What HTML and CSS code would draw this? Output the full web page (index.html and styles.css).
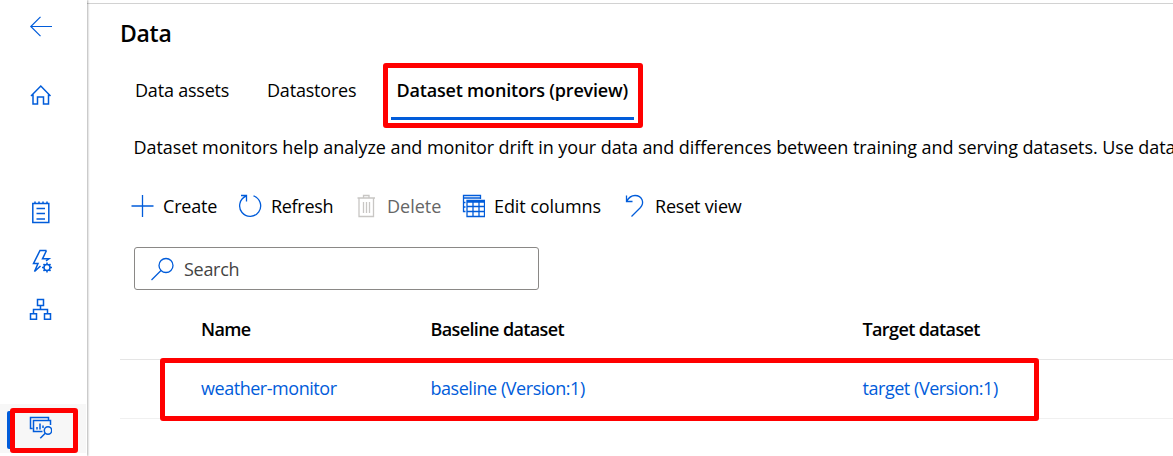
FILE: index.html
```
<!DOCTYPE html>
<html lang="en">
<head>
<meta charset="utf-8">
<title>Data</title>
<link rel="stylesheet" href="styles.css">
</head>
<body>
<div class="app">
  <nav class="sidebar">
    <a class="nav-item nav-back"><svg class="icon" viewBox="0 0 24 24"><path d="M24 12.500H2.500M12.500 2.800 2.800 12.500l9.700 9.700"/></svg></a>
    <a class="nav-item nav-home"><svg class="icon" viewBox="0 0 24 24"><path d="M3 13 12.800 3l9.700 10M5 11.500v9.500h4.500v-7h6v7H20.500v-9.500"/></svg></a>
    <a class="nav-item nav-notebooks"><svg class="icon" viewBox="0 0 24 24"><path d="M4.800 3.500h16v19h-16zM8.500 8.500h8.500M8.500 13.500h8.500M8.500 19h8.500M7 3.500V1.500M11 3.500V1.500M15 3.500V1.500M19 3.500V1.500"/></svg></a>
    <a class="nav-item"><svg class="icon" viewBox="0 0 24 24"><path d="M18.500 1.500h-6.500L5.500 14.500H10L6.500 22.500l6-5.500M18.500 1.500 14.500 9.800H21L18 12"/><circle cx="19" cy="18.500" r="3"/><path d="M19 13.500v2M19 21.500v2M14 18.500h2M22 18.500h2M15.500 15l1.400 1.400M21.100 20.600l1.400 1.400M22.500 15l-1.400 1.400M16.900 20.600 15.500 22"/></svg></a>
    <a class="nav-item"><svg class="icon" viewBox="0 0 24 24"><path d="M9.500 1.500h6v6h-6zM2.500 15.800h6v5.500h-6zM16.500 15.800h6v5.500h-6zM12.500 7.500v4M5.500 15.800v-4.300h14v4.300"/></svg></a>
    <a class="nav-item nav-monitor selected"><svg class="icon" viewBox="0 0 24 24"><path d="M4.500 13.500h-2v-11h18v3M14.500 16.500h-9v-11h17v4.500M9 14.500v-2.500M12 14.500V8.500M15 13v-2.500"/><circle cx="20" cy="15.500" r="3.700"/><path d="m17.300 18.200-5 5"/></svg><span class="highlight highlight-nav"></span></a>
  </nav>
  <main class="content">
    <h1 class="title">Data</h1>
    <div class="tabs">
      <span class="tab tab-assets">Data assets</span>
      <span class="tab tab-stores">Datastores</span>
      <span class="tab tab-active"><span class="tab-label">Dataset monitors (preview)</span><span class="highlight highlight-tab"></span></span>
    </div>
    <p class="description">Dataset monitors help analyze and monitor drift in your data and differences between training and serving datasets. Use data</p>
    <div class="toolbar">
      <span class="command cmd-create"><svg class="icon" viewBox="0 0 24 24"><path d="M12.500 1v22M1.500 12h22"/></svg><span class="label">Create</span></span>
      <span class="command cmd-refresh"><svg class="icon" viewBox="0 0 24 24"><path d="M15.500 1.900A10.500 10.500 0 1 1 8 2.200M3 1.500h5.500v6"/></svg><span class="label">Refresh</span></span>
      <span class="command cmd-delete"><svg class="icon" viewBox="0 0 24 24"><path d="M3.500 4h17.500M9.500 4V1.500h5.500V4M5 4v18.500h14.500V4M9.500 8v11M12.500 8v11M15.500 8v11"/></svg><span class="label">Delete</span></span>
      <span class="command cmd-columns"><svg class="icon" viewBox="0 0 24 24"><path d="M4.500 17.500h-2v-16h17V5M2.500 4h17M2.500 8.500h2M2.500 13h2M6 6.500h17.500v16H6zM6 8h17.500M6 12.500h17.500M6 17.500h17.500M12 8v14.500M18 8v14.500"/></svg><span class="label">Edit columns</span></span>
      <span class="command cmd-reset"><svg class="icon" viewBox="0 0 24 24"><path d="M4.500 1.500v6h6M4.500 7.500C7 3 10 1.500 13 1.500c7.500 0 9.500 7.500 5.500 12l-9 9"/></svg><span class="label">Reset view</span></span>
    </div>
    <div class="search"><svg class="icon" viewBox="0 0 24 24"><circle cx="15" cy="8.500" r="7"/><path d="M10 13.500.5 23"/></svg><span class="search-label">Search</span></div>
    <div class="table">
      <div class="row head"><span class="c-name">Name</span><span class="c-base">Baseline dataset</span><span class="c-target">Target dataset</span></div>
      <div class="row body"><a class="l-name">weather-monitor</a><a class="l-base">baseline (Version:1)</a><a class="l-target">target (Version:1)</a><span class="highlight highlight-row"></span></div>
    </div>
  </main>
</div>
</body>
</html>
```
FILE: styles.css
```
* { box-sizing: border-box; }
body {
  margin: 0;
  background: #fff;
  color: #000;
  font: 18px/24px "Open Sans", "Noto Sans", sans-serif;
  overflow: hidden;
}
.app { display: flex; width: 1173px; height: 456px; overflow: hidden; }
.icon { display: block; width: 24px; height: 24px; flex: none; fill: none; stroke: #015cda; stroke-width: 1.3; }
.sidebar {
  position: relative;
  z-index: 1;
  flex: none;
  width: 87px;
  display: flex;
  flex-direction: column;
  box-shadow: 1px 0 2px rgba(0, 0, 0, .3);
  background: #fff;
}
.sidebar .icon { stroke-width: 1.5; }
.nav-item { display: flex; align-items: center; justify-content: center; height: 49px; flex: none; padding-right: 7px; }
.nav-back { margin-top: 1px; }
.nav-back .icon { stroke-width: 1.2; }
.nav-home { margin-top: 20px; }
.nav-notebooks { margin-top: 68px; }
.nav-monitor { margin-top: 70px; }
.selected { position: relative; width: 86px; padding-right: 6px; padding-bottom: 3px; background: #f7f7f7; }
.selected::before { content: ""; position: absolute; left: 7px; top: 7px; width: 6px; height: 38px; border-radius: 2px; background: #015cda; }
.highlight { position: absolute; border: 5px solid #f00; border-radius: 3px; pointer-events: none; }
.highlight-nav { left: 10px; top: 4px; width: 68px; height: 45px; }
.content { flex: 1; min-width: 0; margin-top: 3px; border-top: 1px solid #d2d2d2; padding-left: 33px; white-space: nowrap; }
.title { margin: 13px 0 0; font-size: 23px; line-height: 32px; font-weight: 600; letter-spacing: -.3px; }
.tabs { display: flex; margin-top: 21px; height: 52px; line-height: 40px; padding-left: 15px; }
.tab-assets { width: 132px; letter-spacing: -.2px; }
.tab-stores { width: 124px; letter-spacing: -.2px; }
.tab-active { position: relative; width: 243px; height: 50px; padding-left: 5.5px; font-weight: 600; border-bottom: 3px solid #015cda; letter-spacing: -.19px; }
.highlight-tab { left: -8px; top: -7px; width: 260px; height: 65px; }
.description { margin: 13px 0 0; padding-left: 13.500px; letter-spacing: -.08px; }
.toolbar { display: flex; margin-top: 35px; padding-left: 10px; }
.command { display: flex; align-items: center; gap: 9px; letter-spacing: -.2px; }
.cmd-create { width: 108px; }
.cmd-refresh { width: 116px; letter-spacing: -.3px; }
.cmd-delete { width: 107px; color: #666; letter-spacing: 0; }
.cmd-delete .icon { stroke: #c8c6c4; }
.cmd-columns { width: 161px; letter-spacing: -.08px; }
.search { display: flex; align-items: center; gap: 9px; width: 405px; height: 43px; margin: 29px 0 0 14px; padding-left: 16px; border: 1px solid #8a8886; border-radius: 3px; color: #444; letter-spacing: -.3px; }
.table { margin-top: 10px; }
.row { display: grid; grid-template-columns: 229.5px 432px 1fr; padding-left: 81px; }
.head { height: 60px; line-height: 58px; border-bottom: 1px solid #e5e5e5; font-weight: 600; letter-spacing: -.62px; }
.body { position: relative; height: 59px; line-height: 56px; border-bottom: 1px solid #f0f0f0; color: #015cda; letter-spacing: -.46px; }
.highlight-row { left: 40px; top: -2px; width: 879px; height: 63px; }
```
